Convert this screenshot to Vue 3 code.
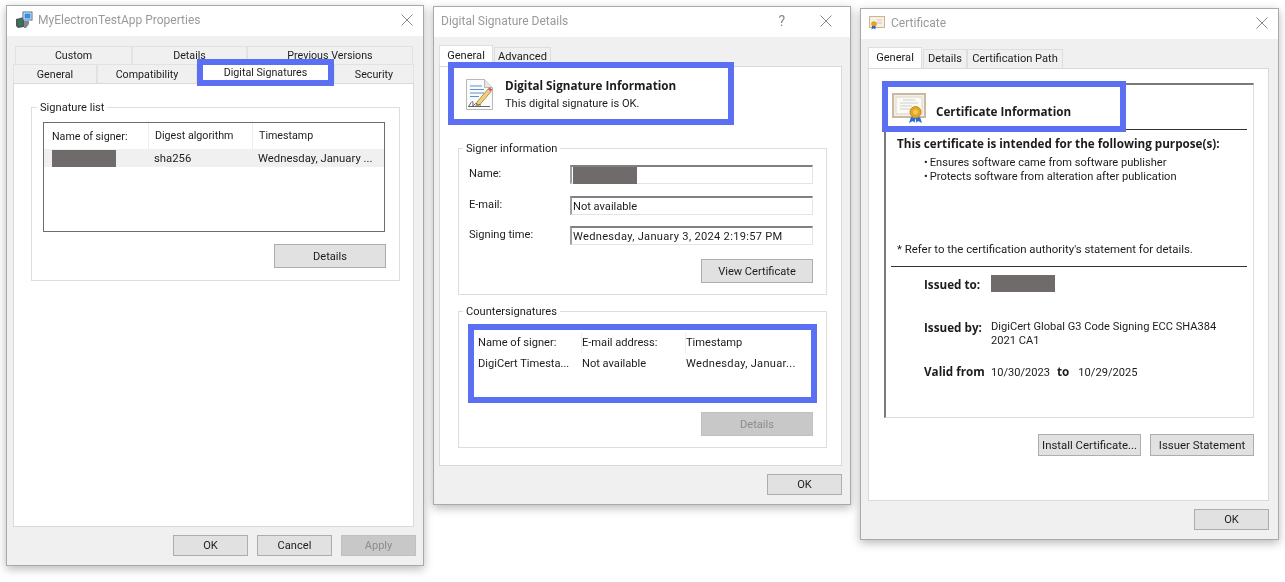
<script setup>
const rearTabs = [
  { name: "Custom", width: 117 },
  { name: "Details", width: 115 },
  { name: "Previous Versions", width: 166 },
];
const frontTabs = [
  { name: "General", width: 84 },
  { name: "Compatibility", width: 100 },
  { name: "Digital Signatures", width: 137, active: true },
  { name: "Security", width: 80 },
];
const signerRows = [
  { label: "Name:", hidden: true },
  { label: "E-mail:", value: "Not available" },
  { label: "Signing time:", value: "Wednesday, January 3, 2024 2:19:57 PM", wide: true },
];
</script>

<template>
  <div class="desktop">
    <!-- properties window -->
    <section class="win win-props">
      <header class="titlebar">
        <svg class="app-icon" width="18" height="18" viewBox="0 0 18 18">
          <path d="M1 8l8-2v10l-6 1-2-2z" fill="#4f5860" />
          <path d="M3 9l4-1v6l-4 1z" fill="#2f7d4f" />
          <rect x="8" y="1" width="9" height="8" fill="#e8eef5" stroke="#4a6f96" />
          <rect x="9.500" y="2.500" width="6" height="5" fill="#2f8fe0" />
          <path d="M9 10h5v3l-3 4H9z" fill="#7d8892" />
        </svg>
        <span class="title">MyElectronTestApp Properties</span>
        <svg class="close" width="12" height="12" viewBox="0 0 12 12"><path d="M.5.500l11 11M11.500.500l-11 11" /></svg>
      </header>
      <div class="body">
        <div class="tab-row rear">
          <div v-for="t in rearTabs" :key="t.name" class="tab" :style="{ width: t.width + 'px' }">{{ t.name }}</div>
        </div>
        <div class="tab-row front">
          <div
            v-for="t in frontTabs"
            :key="t.name"
            class="tab"
            :class="{ current: t.active }"
            :style="{ width: t.width + 'px' }"
          >{{ t.name }}</div>
        </div>
        <div class="page">
          <fieldset class="group sig-list">
            <legend>Signature list</legend>
            <div class="list">
              <div class="list-row head">
                <span>Name of signer:</span>
                <span>Digest algorithm</span>
                <span>Timestamp</span>
              </div>
              <div class="list-row picked">
                <span><i class="redact"></i></span>
                <span>sha256</span>
                <span>Wednesday, January ...</span>
              </div>
            </div>
            <div class="btn-line over"><button class="btn wide">Details</button></div>
          </fieldset>
        </div>
        <footer class="foot">
          <button class="btn">OK</button>
          <button class="btn">Cancel</button>
          <button class="btn off">Apply</button>
        </footer>
      </div>
      <div class="mark mark-tab"></div>
    </section>

    <!-- signature details window -->
    <section class="win win-details">
      <header class="titlebar">
        <span class="title flush">Digital Signature Details</span>
        <span class="help">?</span>
        <svg class="close" width="12" height="12" viewBox="0 0 12 12"><path d="M.5.500l11 11M11.500.500l-11 11" /></svg>
      </header>
      <div class="body">
        <div class="small-tabs">
          <div class="stab on">General</div>
          <div class="stab" style="width: 57px">Advanced</div>
        </div>
        <div class="page pad">
          <div class="sig-head">
            <svg width="30" height="33" viewBox="0 0 30 33">
              <path d="M1.500 1.500h18l8 8v22h-26z" fill="#fbfbfb" stroke="#b9b9b9" />
              <path d="M19.500 1.500v8h8" fill="#e6e6e6" stroke="#b9b9b9" />
              <path d="M5 8h12M5 11.500h14M5 15h14M5 18.500h9" stroke="#5b8fd6" stroke-width="1.200" />
              <path d="M12 24l11-13 3 2.500-11 13-4 1.500z" fill="#f2d07a" stroke="#8a6d2a" stroke-width=".7" />
              <path d="M23 11l1.500-2 3 2.500-1.500 2z" fill="#d9606a" />
              <path d="M4 28c2-4 4-6 4-3s-1 4 1 2 2-2 3-1 2 1 4 1M3 28.500h22" fill="none" stroke="#555" stroke-width=".9" />
            </svg>
            <div class="sig-text">
              <strong>Digital Signature Information</strong>
              <span>This digital signature is OK.</span>
            </div>
          </div>
          <fieldset class="group signer">
            <legend>Signer information</legend>
            <div class="form">
              <template v-for="r in signerRows" :key="r.label">
                <label>{{ r.label }}</label>
                <div class="field" :class="{ spaced: r.wide }"><i v-if="r.hidden" class="redact"></i>{{ r.value }}</div>
              </template>
            </div>
            <div class="btn-line"><button class="btn wide">View Certificate</button></div>
          </fieldset>
          <fieldset class="group counter">
            <legend>Countersignatures</legend>
            <div class="clist">
              <div class="clist-row">
                <span class="sep">Name of signer:</span>
                <span class="sep">E-mail address:</span>
                <span>Timestamp</span>
              </div>
              <div class="clist-row">
                <span>DigiCert Timesta...</span>
                <span>Not available</span>
                <span class="spaced">Wednesday, Januar...</span>
              </div>
            </div>
            <div class="btn-line"><button class="btn wide off">Details</button></div>
          </fieldset>
        </div>
        <footer class="foot">
          <button class="btn">OK</button>
        </footer>
      </div>
      <div class="mark mark-sig"></div>
      <div class="mark mark-counter"></div>
    </section>

    <!-- certificate window -->
    <section class="win win-cert">
      <header class="titlebar">
        <svg class="app-icon" width="17" height="14" viewBox="0 0 17 14">
          <rect x=".5" y=".5" width="15" height="11" fill="#f6efe3" stroke="#cdb48f" />
          <path d="M8 4h5M8 7h5" stroke="#c9c9c9" />
          <circle cx="5" cy="8" r="2.800" fill="#e0a526" />
          <path d="M3 10l-.5 3.500 2-1.200 2 1.200L6.500 10z" fill="#2f62c4" />
        </svg>
        <span class="title">Certificate</span>
        <svg class="close" width="12" height="12" viewBox="0 0 12 12"><path d="M.5.500l11 11M11.500.500l-11 11" /></svg>
      </header>
      <div class="body">
        <div class="small-tabs">
          <div class="stab on">General</div>
          <div class="stab" style="width: 44px">Details</div>
          <div class="stab" style="width: 96px">Certification Path</div>
        </div>
        <div class="page cert-page">
          <div class="panel">
            <div class="cert-head">
              <svg width="34" height="30" viewBox="0 0 34 30">
                <rect x="1" y="1" width="32" height="23" fill="#f5f1ea" stroke="#c9b9a2" stroke-width="2" />
                <rect x="4" y="4" width="26" height="17" fill="#fbfaf7" stroke="#ddd3c4" />
                <path d="M11 7h12M8 10h18M8 13h12M8 16h10" stroke="#cfcfcf" />
                <path d="M19 24l-2 6 4-2 1.500 2 1-5zM28 24l2 6-4-2-1.500 2-1-5z" fill="#2d6bd2" />
                <circle cx="23.500" cy="19" r="5.500" fill="#e3a823" stroke="#c58a16" />
                <circle cx="23.500" cy="19" r="2.500" fill="#f1c65a" />
              </svg>
              <strong>Certificate Information</strong>
            </div>
            <div class="rule"></div>
            <p class="purpose">This certificate is intended for the following purpose(s):</p>
            <ul class="uses">
              <li>Ensures software came from software publisher</li>
              <li>Protects software from alteration after publication</li>
            </ul>
            <p class="note">* Refer to the certification authority's statement for details.</p>
            <div class="rule low"></div>
            <div class="facts">
              <div class="fact issued-to"><b>Issued to:</b><i class="redact"></i></div>
              <div class="fact issued-by"><b>Issued by:</b><span>DigiCert Global G3 Code Signing ECC SHA384<br />2021 CA1</span></div>
              <div class="fact valid"><b>Valid from</b><span>10/30/2023<b class="to">to</b>10/29/2025</span></div>
            </div>
          </div>
          <div class="cert-btns">
            <button class="btn install">Install Certificate...</button>
            <button class="btn install issuer">Issuer Statement</button>
          </div>
        </div>
        <footer class="foot">
          <button class="btn">OK</button>
        </footer>
      </div>
      <div class="mark mark-cert"></div>
    </section>
  </div>
</template>

<style>
body {
  margin: 0;
  background: #fff;
}
</style>

<style scoped>
.desktop {
  position: relative;
  width: 1285px;
  height: 582px;
  overflow: hidden;
  background: #fff;
  font-family: Roboto, "Noto Sans", sans-serif;
  font-size: 11.1px;
  color: #1c1c1c;
  filter: blur(0.35px);
}
strong,
b {
  font-family: "Open Sans", sans-serif;
  font-size: 11.7px;
  font-weight: 700;
}

.win {
  position: absolute;
  box-sizing: border-box;
  display: flex;
  flex-direction: column;
  background: #f0f0f0;
  border: 1px solid #a9a9a9;
  box-shadow: 0 3px 9px rgba(0, 0, 0, 0.28);
}
.win-props { left: 6px; top: 5px; width: 418px; height: 561px; }
.win-details { left: 433px; top: 6px; width: 418px; height: 499px; }
.win-cert { left: 860px; top: 8px; width: 419px; height: 532px; }

.titlebar {
  display: flex;
  align-items: center;
  box-sizing: border-box;
  height: 30px;
  flex: none;
  background: #fff;
  padding: 0 10px 2px 8px;
  color: #9a9a9a;
}
.win-details .titlebar { padding: 0 18px 2px 7px; }
.title { margin-left: 5px; font-size: 12px; }
.title.flush { margin-left: 0; }
.app-icon { flex: none; }
.help { margin-left: auto; margin-right: 35px; font-size: 14px; color: #888; }
.close { margin-left: auto; fill: none; stroke: #8a8a8a; stroke-width: 1; }
.help + .close { margin-left: 0; }

.body {
  flex: 1;
  display: flex;
  flex-direction: column;
  min-height: 0;
}
.win-props .body { padding: 10px 9px 0 6px; }
.win-details .body { padding: 8px 8px 0 5px; }
.win-cert .body { padding: 8px 9px 0 7px; }

.tab-row { display: flex; height: 18px; flex: none; font-size: 10.7px; }
.tab-row.rear { margin-left: 2px; }
.tab-row.front { height: 19px; }
.tab {
  box-sizing: border-box;
  display: flex;
  align-items: center;
  justify-content: center;
  background: #f0f0f0;
  border: 1px solid #e2e2e2;
  border-bottom: none;
}
.tab.current { background: #fff; padding-bottom: 4px; }

.page {
  flex: 1;
  box-sizing: border-box;
  min-height: 0;
  background: #fff;
  border: 1px solid #d9d9d9;
}
.win-props .page { padding: 15px 13px 0 17px; }
.page.pad { padding: 0 14px 0 18px; }

.foot {
  display: flex;
  justify-content: flex-end;
  gap: 9px;
  flex: none;
  height: 38px;
  padding-top: 8px;
  box-sizing: border-box;
}
.win-props .foot { margin-right: -2px; }

.btn {
  box-sizing: border-box;
  width: 75px;
  height: 21px;
  padding: 0;
  background: #e1e1e1;
  border: 1px solid #adadad;
  font: inherit;
  color: #1c1c1c;
  white-space: nowrap;
}
.btn.wide { width: 112px; height: 24px; }
.btn.off { background: #c8c8c8; border-color: #c0c0c0; color: #8c8c8c; }

.group {
  box-sizing: border-box;
  margin: 0;
  min-width: 0;
  border: 1px solid #dddddd;
}
.group legend {
  margin-left: -6px;
  padding: 2px 3px 0;
  line-height: 14px;
}

.sig-list { width: 369px; height: 182px; padding: 7px 14px 0 11px; }
.list {
  box-sizing: border-box;
  height: 110px;
  border: 1px solid #6d6d6d;
}
.list-row {
  display: grid;
  grid-template-columns: 104px 104px 1fr;
  align-items: center;
}
.list-row span { padding-left: 8px; white-space: nowrap; }
.list-row.head { height: 26px; font-size: 10.7px; }
.list-row.head span + span { border-left: 1px solid #eeeeee; height: 26px; line-height: 26px; padding-left: 6px; }
.list-row.picked { height: 18px; background: #f0f0f0; font-size: 11.3px; }
.list-row.picked span + span { padding-left: 6px; }

.redact {
  display: block;
  width: 64px;
  height: 17px;
  background: #6f6b6b;
}

.btn-line { display: flex; justify-content: flex-end; margin-top: 14px; }
.btn-line.over { margin-right: -1px; margin-top: 12px; }

.small-tabs { display: flex; align-items: flex-end; height: 21px; flex: none; }
.stab {
  box-sizing: border-box;
  height: 19px;
  line-height: 18px;
  text-align: center;
  white-space: nowrap;
  background: #f0f0f0;
  border: 1px solid #dedede;
  border-bottom: none;
}
.stab.on {
  width: 54px;
  height: 21px;
  line-height: 19px;
  margin-right: 1px;
  background: #fff;
}

.sig-head {
  display: flex;
  gap: 10px;
  height: 73px;
  box-sizing: border-box;
  padding: 11px 0 0 7px;
}
.sig-text { display: flex; flex-direction: column; gap: 1px; line-height: 17px; margin-top: -1px; }

.signer { height: 155px; padding: 9px 13px 0 10px; }
.form {
  display: grid;
  grid-template-columns: 101px 243px;
  row-gap: 11.5px;
}
.form label { line-height: 15px; padding-top: 1px; }
.field {
  box-sizing: border-box;
  height: 19px;
  line-height: 17px;
  padding-left: 1px;
  white-space: nowrap;
  border: 1px solid #e4e4e4;
  border-top: 2px solid #808080;
  border-left: 2px solid #a0a0a0;
}
.spaced { letter-spacing: 0.3px; }

.counter { height: 145px; margin-top: 8px; padding: 13px 13px 0 14px; }
.counter legend { margin-left: -10px; }
.clist { height: 66px; }
.clist-row {
  display: grid;
  grid-template-columns: 104px 104px 1fr;
  padding-left: 5px;
  height: 21px;
  line-height: 21px;
  white-space: nowrap;
}
.sep { border-right: 1px solid #eeeeee; }

.cert-page { padding: 14px 14px 0 15px; }
.panel {
  box-sizing: border-box;
  height: 335px;
  border: 1px solid #dedede;
  border-top: 2px solid #7a7a7a;
  border-left: 2px solid #7a7a7a;
  padding: 0 6px 0 5px;
}
.cert-head {
  display: flex;
  align-items: flex-end;
  gap: 10px;
  height: 44px;
  padding: 0 0 6px 1px;
  box-sizing: border-box;
}
.cert-head strong { line-height: 17px; margin-bottom: 3px; }
.rule { height: 1px; background: #333; }
.purpose { margin: 5px 0 0 6px; font-family: "Open Sans", sans-serif; font-size: 11.7px; font-weight: 700; line-height: 17px; white-space: nowrap; }
.uses { margin: 4px 0 0 33px; padding: 0; list-style: none; line-height: 14px; }
.uses li::before { content: "\2022"; margin-right: 2px; }
.note { margin: 57px 0 0 6px; line-height: 17px; font-size: 11.4px; }
.rule.low { margin-top: 8px; }
.facts { padding-left: 33px; }
.fact { display: grid; grid-template-columns: 67px 1fr; line-height: 14px; }
.issued-to { padding-top: 8px; }
.issued-to b { padding-top: 2px; }
.issued-by { margin-top: 28px; }
.valid { margin-top: 16px; }
.to { margin: 0 9px 0 7px; }

.cert-btns { display: flex; justify-content: flex-end; gap: 9px; margin-top: 16px; }
.btn.install { width: 103px; height: 22px; font-size: 11.4px; }
.btn.issuer { width: 104px; }

.mark {
  position: absolute;
  box-sizing: border-box;
  border: 6px solid #5b6ff2;
  pointer-events: none;
}
.mark-tab { left: 190px; top: 53px; width: 137px; height: 27px; }
.mark-sig { left: 14px; top: 55px; width: 286px; height: 63px; }
.mark-counter { left: 34px; top: 317px; width: 349px; height: 79px; }
.mark-cert { left: 21px; top: 72px; width: 244px; height: 51px; }
</style>
